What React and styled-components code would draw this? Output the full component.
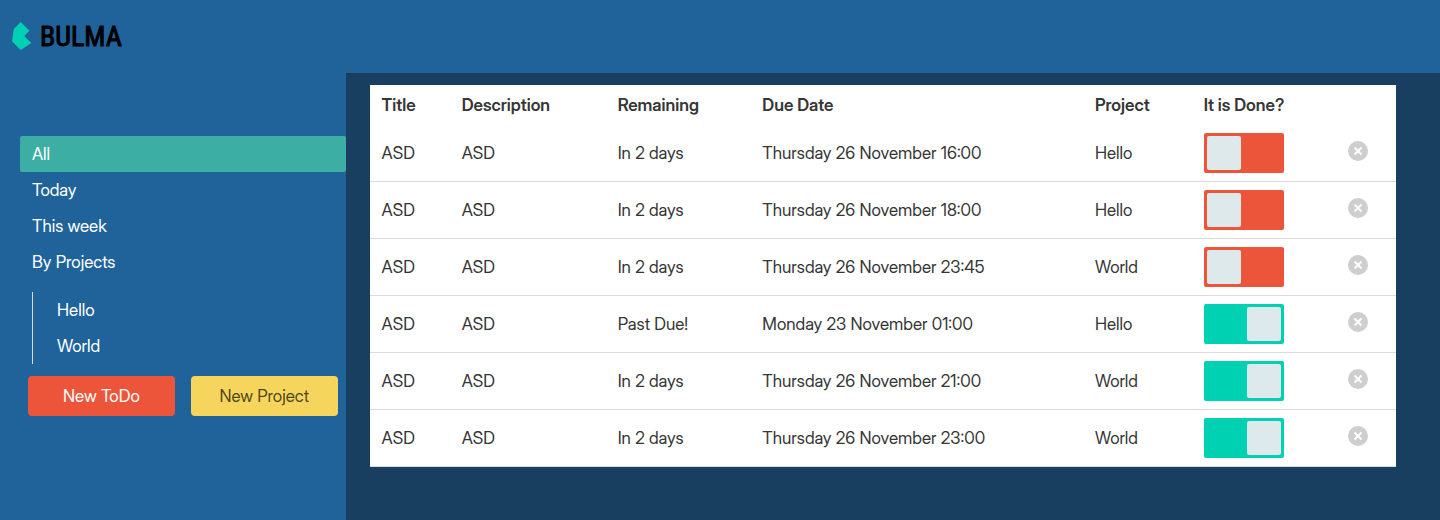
import React, { useState } from "react";
import styled, { createGlobalStyle } from "styled-components";

const GlobalStyle = createGlobalStyle`
  *, *::before, *::after { box-sizing: border-box; }
  body {
    margin: 0;
    background: #183f5f;
    color: #363636;
    font-family: "Inter Display", Inter, "Liberation Sans", sans-serif;
    font-size: 17px;
    line-height: 24px;
    -webkit-font-smoothing: antialiased;
  }
`;

const Page = styled.div`
  display: flex;
  flex-direction: column;
  min-height: 100vh;
`;

const Navbar = styled.header`
  display: flex;
  align-items: stretch;
  min-height: 73px;
  background: #20639b;
`;

const Brand = styled.a`
  display: flex;
  align-items: center;
  gap: 8px;
  padding: 0 12px 1px;
  color: #000;
  text-decoration: none;
`;

const BrandMark = styled.svg`
  width: 20px;
  height: 28px;
  fill: #00d1b2;
`;

const BrandName = styled.span`
  padding-top: 2px;
  font-family: "Roboto Condensed", "DejaVu Sans Condensed", sans-serif;
  font-size: 28px;
  font-weight: 400;
  line-height: 28px;
  -webkit-text-stroke: 1px #000;
  stroke-linejoin: round;
`;

const Body = styled.div`
  display: flex;
  flex: 1;
`;

const Sidebar = styled.aside`
  flex: none;
  width: 24%;
  padding: 63px 0 24px 20px;
  background: #20639b;
`;

const MenuList = styled.ul`
  list-style: none;
  margin: 0;
  padding: 0;
`;

const SubList = styled(MenuList)`
  margin: 12px;
  padding-left: 12px;
  border-left: 1px solid #dbdbdb;
`;

const MenuLink = styled.a`
  display: block;
  padding: 6px 12px;
  border-radius: 2px;
  color: #fff;
  text-decoration: none;
  background: ${(p) => (p.$active ? "#3caea3" : "transparent")};
`;

const Actions = styled.div`
  display: flex;
  gap: 16px;
  padding: 0 8px;
`;

const ActionButton = styled.button`
  flex: 1 1 0;
  height: 40px;
  padding: 0;
  border: 0;
  border-radius: 4px;
  font: inherit;
  cursor: pointer;
  white-space: nowrap;
  background: ${(p) => (p.$tone === "danger" ? "#ed553b" : "#f6d55c")};
  color: ${(p) => (p.$tone === "danger" ? "#fff" : "rgba(0, 0, 0, 0.7)")};
`;

const Content = styled.main`
  flex: 1;
  min-width: 0;
  padding: 12px 44px 12px 24px;
`;

const Table = styled.table`
  width: 100%;
  table-layout: fixed;
  border-collapse: separate;
  border-spacing: 0;
  background: #fff;
`;

const Col = styled.col`
  width: ${(p) => p.$width};
`;

const HeadCell = styled.th`
  padding: 8px 12px;
  text-align: left;
  font-weight: 600;
  white-space: nowrap;
`;

const Cell = styled.td`
  height: 57px;
  padding: 8px 12px;
  border-bottom: 1px solid #dbdbdb;
  vertical-align: middle;
  white-space: nowrap;
`;

const ToggleLabel = styled.label`
  display: block;
  width: 80px;
  height: 40px;
`;

const ToggleInput = styled.input`
  appearance: none;
  display: flex;
  width: 80px;
  height: 40px;
  margin: 0;
  padding: 3px;
  border-radius: 2px;
  background: #ed553b;
  cursor: pointer;

  &::before {
    content: "";
    width: 34px;
    height: 34px;
    border-radius: 2px;
    background: #dee9eb;
  }

  &:checked {
    justify-content: flex-end;
    background: #00d1b2;
  }
`;

const DeleteButton = styled.button`
  display: block;
  width: 20px;
  height: 20px;
  margin-bottom: 4px;
  padding: 0;
  border: 0;
  border-radius: 50%;
  background: #cecece;
  cursor: pointer;
`;

const Cross = styled.svg`
  display: block;
  width: 20px;
  height: 20px;
  stroke: #fff;
  stroke-width: 2;
  fill: none;
`;

const filters = ["All", "Today", "This week", "By Projects"];
const projects = ["Hello", "World"];
const widths = ["7.8%", "15.2%", "14.1%", "32.4%", "10.6%", "14.1%", "5.8%"];
const headings = ["Title", "Description", "Remaining", "Due Date", "Project", "It is Done?"];
const initialTodos = [
  { remaining: "In 2 days", due: "Thursday 26 November 16:00", project: "Hello", done: false },
  { remaining: "In 2 days", due: "Thursday 26 November 18:00", project: "Hello", done: false },
  { remaining: "In 2 days", due: "Thursday 26 November 23:45", project: "World", done: false },
  { remaining: "Past Due!", due: "Monday 23 November 01:00", project: "Hello", done: true },
  { remaining: "In 2 days", due: "Thursday 26 November 21:00", project: "World", done: true },
  { remaining: "In 2 days", due: "Thursday 26 November 23:00", project: "World", done: true },
].map((todo, id) => ({ id, title: "ASD", description: "ASD", ...todo }));

export default function App() {
  const [active, setActive] = useState("All");
  const [todos, setTodos] = useState(initialTodos);

  const toggle = (id) =>
    setTodos((list) => list.map((t) => (t.id === id ? { ...t, done: !t.done } : t)));
  const remove = (id) => setTodos((list) => list.filter((t) => t.id !== id));

  const link = (name) => (
    <MenuLink href="#" $active={active === name} onClick={() => setActive(name)}>
      {name}
    </MenuLink>
  );

  return (
    <Page>
      <GlobalStyle />
      <Navbar>
        <Brand href="#">
          <BrandMark viewBox="0 0 110 160" preserveAspectRatio="xMinYMid meet" aria-hidden="true">
            <path d="M0 110 L10 40 L50 0 L100 50 L70 80 L110 120 L50 160 Z" />
          </BrandMark>
          <BrandName>BULMA</BrandName>
        </Brand>
      </Navbar>
      <Body>
        <Sidebar>
          <MenuList>
            {filters.map((name) => (
              <li key={name}>{link(name)}</li>
            ))}
            <li>
              <SubList>
                {projects.map((name) => (
                  <li key={name}>{link(name)}</li>
                ))}
              </SubList>
            </li>
          </MenuList>
          <Actions>
            <ActionButton type="button" $tone="danger">New ToDo</ActionButton>
            <ActionButton type="button" $tone="warning">New Project</ActionButton>
          </Actions>
        </Sidebar>
        <Content>
          <Table>
            <colgroup>
              {widths.map((width, i) => (
                <Col key={i} $width={width} />
              ))}
            </colgroup>
            <thead>
              <tr>
                {headings.map((text) => (
                  <HeadCell key={text} scope="col">{text}</HeadCell>
                ))}
                <HeadCell as="td" />
              </tr>
            </thead>
            <tbody>
              {todos.map((todo) => (
                <tr key={todo.id}>
                  <Cell>{todo.title}</Cell>
                  <Cell>{todo.description}</Cell>
                  <Cell>{todo.remaining}</Cell>
                  <Cell>{todo.due}</Cell>
                  <Cell>{todo.project}</Cell>
                  <Cell>
                    <ToggleLabel>
                      <ToggleInput
                        type="checkbox"
                        aria-label="It is Done?"
                        checked={todo.done}
                        onChange={() => toggle(todo.id)}
                      />
                    </ToggleLabel>
                  </Cell>
                  <Cell>
                    <DeleteButton type="button" aria-label="Delete" onClick={() => remove(todo.id)}>
                      <Cross viewBox="0 0 20 20" aria-hidden="true">
                        <path d="M6.5 6.5 L13.5 13.5 M13.5 6.5 L6.5 13.5" />
                      </Cross>
                    </DeleteButton>
                  </Cell>
                </tr>
              ))}
            </tbody>
          </Table>
        </Content>
      </Body>
    </Page>
  );
}
